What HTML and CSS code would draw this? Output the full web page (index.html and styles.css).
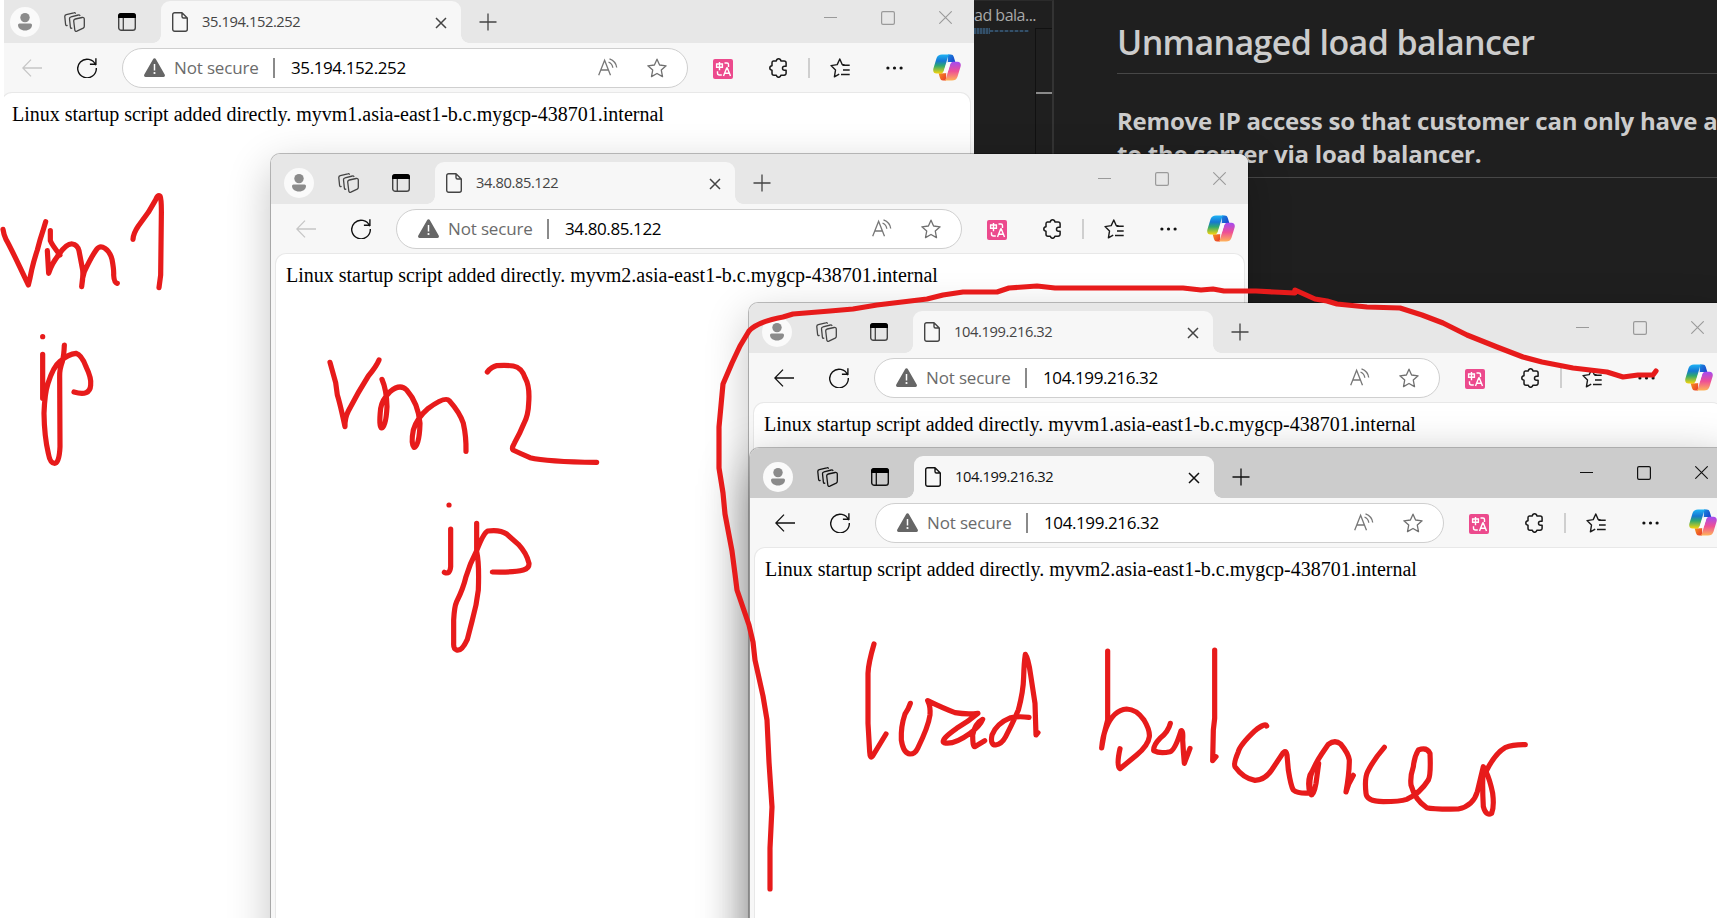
FILE: index.html
```html
<!DOCTYPE html>
<html lang="en">
<head>
<meta charset="utf-8">
<title>Unmanaged load balancer</title>
<link rel="stylesheet" href="styles.css">
</head>
<body>
<svg class="defs" width="0" height="0" aria-hidden="true">
  <defs>
    <linearGradient id="cp-a" x1="0" y1="0" x2="0" y2="1"><stop offset="0" stop-color="#1fb4f5"/><stop offset=".35" stop-color="#1577d2"/><stop offset=".6" stop-color="#2fa86e"/><stop offset="1" stop-color="#f5d40c"/></linearGradient>
    <linearGradient id="cp-b" x1="0" y1="0" x2="0" y2="1"><stop offset="0" stop-color="#a34bf2"/><stop offset=".5" stop-color="#ee4f96"/><stop offset="1" stop-color="#ffb457"/></linearGradient>
    <linearGradient id="cp-c" x1="0" y1="0" x2="1" y2="1"><stop offset="0" stop-color="#1a8be0"/><stop offset="1" stop-color="#1733c4"/></linearGradient>
    <linearGradient id="cp-d" x1="0" y1="0" x2="1" y2="1"><stop offset="0" stop-color="#f9a01b"/><stop offset="1" stop-color="#e8362c"/></linearGradient>
  </defs>
  <symbol id="avatar" viewBox="0 0 30 30"><circle cx="15" cy="15" r="15" fill="#fafafa"/><circle cx="15" cy="10.6" r="4.7" fill="#8b8b8b"/><path d="M9.500 16.500h11a1.500 1.500 0 0 1 1.500 1.500c0 3-2.800 5.500-7 5.500s-7-2.500-7-5.500a1.500 1.500 0 0 1 1.500-1.500z" fill="#8b8b8b"/></symbol>
  <symbol id="spaces" viewBox="0 0 21 20"><g fill="none" stroke="currentColor" stroke-width="1.300" stroke-linejoin="round" stroke-linecap="round"><path d="M11.300 7l6.800-1.500c1.300-.3 2.200.3 2.200 1.500v7.300c0 .9-.3 1.500-1.100 1.900l-6.300 2.900c-1.200.5-2 0-2.100-1.100L9.700 9c-.1-1.100.5-1.700 1.600-2z"/><path d="M15.900 3.500c-.3-.5-.8-.7-1.500-.5L7 4.800c-1 .2-1.600.9-1.500 1.900l.9 8.500c.1.900.6 1.200 1.400 1"/><path d="M11.300 1.200c-.3-.5-.8-.6-1.500-.4L2.300 2.700C1.200 3 .7 3.700.8 4.700l.8 7.800c.1.900.6 1.200 1.500 1"/></g></symbol>
  <symbol id="vtabs" viewBox="0 0 18 18"><rect x=".7" y=".7" width="16.600" height="16.600" rx="2.600" fill="none" stroke="currentColor" stroke-width="1.400"/><path d="M3 0h12a3 3 0 0 1 3 3v2H0V3a3 3 0 0 1 3-3z" fill="#000"/><path d="M5.300 5v12" stroke="currentColor" stroke-width="1.300"/></symbol>
  <symbol id="page" viewBox="0 0 16 20"><path d="M2.700.7H10l5.300 5.300v11.300a2 2 0 0 1-2 2H2.700a2 2 0 0 1-2-2V2.700a2 2 0 0 1 2-2zM10 .7V4.500A1.500 1.500 0 0 0 11.500 6h3.800" fill="none" stroke="currentColor" stroke-width="1.400" stroke-linejoin="round"/></symbol>
  <symbol id="x" viewBox="0 0 12 12"><path d="M1 1l10 10M11 1L1 11" stroke="currentColor" stroke-width="1.500" fill="none"/></symbol>
  <symbol id="plus" viewBox="0 0 18 18"><path d="M9 .5v17M.5 9h17" stroke="currentColor" stroke-width="1.300" fill="none"/></symbol>
  <symbol id="min" viewBox="0 0 13 13"><path d="M0 6.500h13" stroke="currentColor" stroke-width="1"/></symbol>
  <symbol id="max" viewBox="0 0 14 14"><rect x=".6" y=".6" width="12.800" height="12.800" rx="1.400" fill="none" stroke="currentColor" stroke-width="1.200"/></symbol>
  <symbol id="cls" viewBox="0 0 13 13"><path d="M.3.300l12.400 12.400M12.700.300L.3 12.700" stroke="currentColor" stroke-width="1.100"/></symbol>
  <symbol id="back" viewBox="0 0 20 18"><path d="M20 9H.8M9 .6L.8 9 9 17.400" fill="none" stroke="currentColor" stroke-width="1.300"/></symbol>
  <symbol id="reload" viewBox="0 0 20 20"><path d="M18.700 7.200A9.300 9.300 0 1 0 19.300 10M18.900 .3v6h-6" fill="none" stroke="#111" stroke-width="1.400"/></symbol>
  <symbol id="warn" viewBox="0 0 21 19"><path d="M9.200.9a1.500 1.500 0 0 1 2.600 0l8.900 15.700a1.500 1.500 0 0 1-1.300 2.300H1.600A1.500 1.500 0 0 1 .3 16.600z" fill="#666"/><path d="M10.500 6v6.500" stroke="#fff" stroke-width="1.500"/><circle cx="10.500" cy="15" r="1.100" fill="#fff"/></symbol>
  <symbol id="read" viewBox="0 0 20 18"><g fill="none" stroke="#777" stroke-width="1.300"><path d="M.7 17.300L6.600 2.200l5.900 15.100M2.900 12h7.400M10.500 4c2.400 1 4 3 4.300 5.800M11.500.9c4.100 1.500 6.700 4.400 7.200 8.600"/></g></symbol>
  <symbol id="star" viewBox="0 0 20 20"><path d="M10 1.200l2.600 5.800 6.500.8-4.800 4.300 1.200 6.500L10 15.500l-5.500 3.100 1.200-6.500L.9 7.800 7.400 7z" fill="none" stroke="#707070" stroke-width="1.300" stroke-linejoin="round"/></symbol>
  <symbol id="translate" viewBox="0 0 20 20"><rect width="20" height="20" rx="2" fill="#ec4a8d"/><g fill="none" stroke="#fff" stroke-width="1.400"><path d="M3.600 5h5.800v3.200H3.600zM6.500 3v8.300M11.500 4h2.500c1 0 1.500.6 1.500 1.600V8M4.500 12.300v1.700c0 1.300.6 2 2 2h2.300M10.500 17l3.200-8h.6l3.200 8M11.700 14.300h4.600"/></g></symbol>
  <symbol id="puzzle" viewBox="0 0 19 20"><path d="M4.500 3h2.800c.2-1.400 1-2.200 2.300-2.200s2.100.8 2.300 2.200h3.200a2 2 0 0 1 2 2v3.200h-1.600a2 2 0 0 0 0 4h1.600v3a2 2 0 0 1-2 2h-3.200c-.2 1.400-1 2.100-2.300 2.100s-2.100-.7-2.300-2.100H5a2 2 0 0 1-2-2v-3C1.600 12 .8 11.300.8 10s.8-2.100 2.200-2.300V4.900A1.800 1.800 0 0 1 4.500 3z" fill="none" stroke="#1a1a1a" stroke-width="1.500" stroke-linejoin="round"/></symbol>
  <symbol id="favs" viewBox="0 0 20 20"><path d="M12.500 7.200H19.700M13 12h6.700M11 16.500h8.700" stroke="#1a1a1a" stroke-width="1.400"/><path d="M14.500 6.700L12.200 6.500 9.800 1 7.200 6.600 1 7.600l4.500 4.500L4.400 18.800l4.800-2.700" fill="none" stroke="#1a1a1a" stroke-width="1.400" stroke-linejoin="round"/></symbol>
  <symbol id="dots" viewBox="0 0 17 4"><g fill="#111"><circle cx="1.900" cy="2" r="1.600"/><circle cx="8.500" cy="2" r="1.600"/><circle cx="15.100" cy="2" r="1.600"/></g></symbol>
  <symbol id="copilot" viewBox="0 0 28 27"><path d="M15 .4h2.800c1.600 0 2.500.8 3 2.500l1.500 5h-4c-2 0-3 .8-3.600 2.500z" fill="url(#cp-c)"/><path d="M13 26.600h-3c-1.600 0-2.500-.8-3-2.500l-1.400-4.800h3.800c2 0 3.200-.8 3.800-2.500z" fill="url(#cp-d)"/><path d="M9 .4h8.500c-1.300 0-2.100.9-2.500 2.300L10.700 17c-.5 1.700-1.500 2.400-3 2.400H3.500C.8 19.400-.3 17.500.4 14.500L3.600 4C4.400 1.600 6.200.4 9 .4z" fill="url(#cp-a)"/><path d="M19 26.600h-8.600c1.400 0 2.200-.9 2.600-2.300L17.300 10c.5-1.500 1.500-2.200 3-2.200h4.200c2.700 0 3.800 2 3.100 4.800L24.400 23c-.8 2.400-2.600 3.600-5.400 3.600z" fill="url(#cp-b)"/><path d="M15.600 8h3.700c-1.300.3-1.800 1-2.200 2.200L15 17c-.5 1.500-1.200 2.200-2.600 2.300H8.900c1.200-.3 1.700-1.100 2.100-2.300l2.200-6.800C13.700 8.700 14.400 8 15.600 8z" fill="#fbfbfb"/></symbol>
</svg>

<div class="desktop">
  <section class="editor">
    <div class="pane">
      <div class="crumb">ad bala...</div>
      <div class="minimap"><i class="code"></i><i class="code thin"></i></div>
      <div class="ruler"><i class="mark"></i></div>
    </div>
    <article class="preview">
      <h1>Unmanaged load balancer</h1>
      <h3>Remove IP access so that customer can only have a<br>to the server via load balancer.</h3>
    </article>
  </section>

  <section class="window w1">
    <header class="strip">
      <svg class="avatar"><use href="#avatar"/></svg>
      <svg class="spaces"><use href="#spaces"/></svg>
      <svg class="vtabs"><use href="#vtabs"/></svg>
      <div class="tab"><svg class="page"><use href="#page"/></svg><span class="title">35.194.152.252</span><svg class="close"><use href="#x"/></svg></div>
      <svg class="plus"><use href="#plus"/></svg>
      <div class="controls"><svg><use href="#min"/></svg><svg class="max"><use href="#max"/></svg><svg><use href="#cls"/></svg></div>
    </header>
    <nav class="toolbar">
      <svg class="back disabled"><use href="#back"/></svg>
      <svg class="reload"><use href="#reload"/></svg>
      <div class="address"><svg class="warn"><use href="#warn"/></svg><span class="note">Not secure</span><i class="bar"></i><span class="url">35.194.152.252</span><svg class="read"><use href="#read"/></svg><svg class="star"><use href="#star"/></svg></div>
      <svg class="translate"><use href="#translate"/></svg>
      <svg class="puzzle"><use href="#puzzle"/></svg>
      <i class="sep"></i>
      <svg class="favs"><use href="#favs"/></svg>
      <svg class="dots"><use href="#dots"/></svg>
      <svg class="copilot"><use href="#copilot"/></svg>
    </nav>
    <main class="content">Linux startup script added directly. myvm1.asia-east1-b.c.mygcp-438701.internal</main>
  </section>
  <div class="edge"></div>

  <section class="window w2">
    <header class="strip">
      <svg class="avatar"><use href="#avatar"/></svg>
      <svg class="spaces"><use href="#spaces"/></svg>
      <svg class="vtabs"><use href="#vtabs"/></svg>
      <div class="tab"><svg class="page"><use href="#page"/></svg><span class="title">34.80.85.122</span><svg class="close"><use href="#x"/></svg></div>
      <svg class="plus"><use href="#plus"/></svg>
      <div class="controls"><svg><use href="#min"/></svg><svg class="max"><use href="#max"/></svg><svg><use href="#cls"/></svg></div>
    </header>
    <nav class="toolbar">
      <svg class="back disabled"><use href="#back"/></svg>
      <svg class="reload"><use href="#reload"/></svg>
      <div class="address"><svg class="warn"><use href="#warn"/></svg><span class="note">Not secure</span><i class="bar"></i><span class="url">34.80.85.122</span><svg class="read"><use href="#read"/></svg><svg class="star"><use href="#star"/></svg></div>
      <svg class="translate"><use href="#translate"/></svg>
      <svg class="puzzle"><use href="#puzzle"/></svg>
      <i class="sep"></i>
      <svg class="favs"><use href="#favs"/></svg>
      <svg class="dots"><use href="#dots"/></svg>
      <svg class="copilot"><use href="#copilot"/></svg>
    </nav>
    <main class="content">Linux startup script added directly. myvm2.asia-east1-b.c.mygcp-438701.internal</main>
  </section>

  <section class="window w3">
    <header class="strip">
      <svg class="avatar"><use href="#avatar"/></svg>
      <svg class="spaces"><use href="#spaces"/></svg>
      <svg class="vtabs"><use href="#vtabs"/></svg>
      <div class="tab"><svg class="page"><use href="#page"/></svg><span class="title">104.199.216.32</span><svg class="close"><use href="#x"/></svg></div>
      <svg class="plus"><use href="#plus"/></svg>
      <div class="controls"><svg><use href="#min"/></svg><svg class="max"><use href="#max"/></svg><svg><use href="#cls"/></svg></div>
    </header>
    <nav class="toolbar">
      <svg class="back"><use href="#back"/></svg>
      <svg class="reload"><use href="#reload"/></svg>
      <div class="address"><svg class="warn"><use href="#warn"/></svg><span class="note">Not secure</span><i class="bar"></i><span class="url">104.199.216.32</span><svg class="read"><use href="#read"/></svg><svg class="star"><use href="#star"/></svg></div>
      <svg class="translate"><use href="#translate"/></svg>
      <svg class="puzzle"><use href="#puzzle"/></svg>
      <i class="sep"></i>
      <svg class="favs"><use href="#favs"/></svg>
      <svg class="dots"><use href="#dots"/></svg>
      <svg class="copilot"><use href="#copilot"/></svg>
    </nav>
    <main class="content">Linux startup script added directly. myvm1.asia-east1-b.c.mygcp-438701.internal</main>
  </section>

  <section class="window w4 active">
    <header class="strip">
      <svg class="avatar"><use href="#avatar"/></svg>
      <svg class="spaces"><use href="#spaces"/></svg>
      <svg class="vtabs"><use href="#vtabs"/></svg>
      <div class="tab"><svg class="page"><use href="#page"/></svg><span class="title">104.199.216.32</span><svg class="close"><use href="#x"/></svg></div>
      <svg class="plus"><use href="#plus"/></svg>
      <div class="controls"><svg><use href="#min"/></svg><svg class="max"><use href="#max"/></svg><svg><use href="#cls"/></svg></div>
    </header>
    <nav class="toolbar">
      <svg class="back"><use href="#back"/></svg>
      <svg class="reload"><use href="#reload"/></svg>
      <div class="address"><svg class="warn"><use href="#warn"/></svg><span class="note">Not secure</span><i class="bar"></i><span class="url">104.199.216.32</span><svg class="read"><use href="#read"/></svg><svg class="star"><use href="#star"/></svg></div>
      <svg class="translate"><use href="#translate"/></svg>
      <svg class="puzzle"><use href="#puzzle"/></svg>
      <i class="sep"></i>
      <svg class="favs"><use href="#favs"/></svg>
      <svg class="dots"><use href="#dots"/></svg>
      <svg class="copilot"><use href="#copilot"/></svg>
    </nav>
    <main class="content">Linux startup script added directly. myvm2.asia-east1-b.c.mygcp-438701.internal</main>
  </section>

  <!-- Red pen strokes over the windows -->
  <svg class="ink" viewBox="0 0 1717 918">
    <g transform="translate(0 180) scale(.33333)">
      <path d="M9 148Q11 163 18 178Q30 198 85 315Q90 296 95 270Q102 240 112 210Q120 178 128 155L137 125"/>
      <path d="M151 152V182Q156 195 180 225M142 212L146 280Q155 250 178 222Q200 190 217 192Q232 194 237 212L248 270Q250 290 245 320Q246 295 253 275Q275 228 290 208Q300 195 315 205Q330 215 336 238Q342 270 341 285Q342 308 352 310"/>
      <path d="M399 178Q400 160 415 138L445 97L466 61Q473 43 480 48Q485 58 484 110L482 285L477 323"/>
      <path d="M128 470h.1M128 523V655M193 495Q192 525 187 545Q178 570 179 590L180 800Q178 850 164 850Q150 850 145 820Q133 770 132 700Q134 640 144 610Q160 560 180 544Q205 522 228 520Q245 525 258 560Q275 595 272 615Q270 650 222 636"/>
    </g>
    <g transform="translate(310 340) scale(.33333)">
      <path d="M60 67L77 128L82 165Q90 190 105 260Q104 235 115 213Q145 155 175 108Q200 78 207 60"/>
      <path d="M216 118Q230 150 231 200Q228 262 215 264Q206 262 212 205Q216 180 240 155Q270 130 290 150Q325 190 330 250Q328 320 312 322Q302 310 310 270Q320 235 355 205Q405 168 418 182Q450 218 460 250Q469 290 468 334"/>
      <path d="M532 96Q545 80 560 77Q590 75 610 78Q635 82 646 115Q660 140 656 190Q655 225 642 250Q630 280 613 310Q604 325 609 330Q630 340 660 353Q710 365 860 367"/>
      <path d="M417 495h.1M422 567V680Q420 705 403 697"/>
      <path d="M500 550L500 635Q508 670 505 750Q500 795 487 840L472 898Q455 935 440 930Q430 927 431 910V840Q433 800 440 785Q460 745 468 710Q480 670 500 632Q520 580 533 573Q570 568 590 582L625 613Q650 640 657 670Q658 685 640 690Q610 698 547 696"/>
    </g>
    <g transform="translate(840 620) scale(.33333)">
      <path d="M102 72Q85 130 84 160V310L89 395Q90 418 98 408L138 342"/>
      <path d="M211 250Q205 268 195 282Q182 320 184 360Q190 400 210 402Q225 402 233 385Q265 320 270 285Q272 260 263 242Q310 265 345 278Q380 284 414 280Q385 305 350 325Q300 360 312 368Q340 376 390 340Q420 318 428 298Q405 310 398 345Q398 380 404 380L434 362"/>
      <path d="M567 292Q535 288 512 293Q470 310 456 345Q450 375 467 375Q485 373 497 350Q520 305 535 270Q550 215 551 170Q552 130 556 103Q565 115 572 165L585 250L588 345L594 338"/>
      <path d="M803 93V300Q790 345 785 384Q788 350 798 325Q820 270 860 267Q890 268 912 300Q930 330 928 350Q925 375 890 405Q860 430 840 446Q828 440 840 386"/>
      <path d="M991 310Q985 335 960 355Q940 375 941 392Q960 402 990 395Q1005 390 1023 332Q1030 330 1028 360Q1030 395 1033 430L1050 385"/>
    </g>
    <g transform="translate(1180 620) scale(.33333)">
      <path d="M104 90V295L100 330L98 422L108 410"/>
      <path d="M260 318Q255 308 225 332Q180 375 175 395Q160 430 165 440Q190 475 225 481Q255 480 275 450L305 405Q317 385 321 405L325 450Q333 500 340 510Q355 522 390 519Q382 490 390 465Q410 430 416 430L408 490Q402 525 394 525Q386 500 392 468Q400 440 425 402L445 373Q465 358 482 372Q505 400 508 420Q508 460 498 516Q505 490 520 466"/>
      <path d="M613 382Q580 420 563 455Q553 475 558 520Q560 545 610 545Q660 545 680 538Q720 520 745 480Q753 465 750 400Q740 380 715 390Q703 410 700 440Q690 470 693 495Q705 540 740 563Q760 568 835 567Q880 558 892 515L910 440Q906 490 910 560Q918 590 935 580Q943 560 938 520Q930 480 918 455Q945 400 975 383Q1000 373 1036 374"/>
    </g>
    <path d="M770 889L770 848L772 807L769 762L768 741L767 720L763 696L755 660L753 642L749 625L737 590L735 574L732 551L725 514L723 493L719 468L719 427L723 384L732 363L740 346L749 331Q757 322 783 317L793 314L830 311L853 309L877 305L927 299L943 295L963 292L997 292L1009 288L1037 286L1055 288L1183 288L1201 290L1213 289L1224 291L1256 291L1274 292L1295 293L1295 290L1315 299L1327 301L1337 304L1367 307L1400 308L1422 315L1443 323L1467 335L1497 347L1523 357L1542 362L1573 368L1607 372L1623 377L1638 375L1653 375L1656 371"/>
  </svg>
</div>
</body>
</html>
```
FILE: styles.css
```css
* { box-sizing: border-box; }
body { margin: 0; background: #fff; font-family: "Open Sans", "Noto Sans", sans-serif; }
svg { flex: none; display: block; }
.defs { position: absolute; }
.desktop { position: relative; width: 1717px; height: 918px; overflow: hidden; background: #fff; }

/* Dark editor behind the browser windows */
.editor { display: flex; height: 400px; margin-left: 974px; background: #1f1f1f; }
.pane { position: relative; width: 80px; padding-top: 4px; border-right: 2px solid #333; border-top: 1px solid #2b2b2b; }
.crumb { height: 23px; font-size: 16px; line-height: 20px; letter-spacing: -.5px; color: #a9a9a9; white-space: nowrap; }
.minimap { display: flex; }
.code { width: 16px; height: 6px; opacity: .6; background: repeating-linear-gradient(90deg, #41709a 0 2px, #2a4258 2px 3px); }
.code.thin { width: 39px; height: 2px; margin-top: 2px; background: repeating-linear-gradient(90deg, #41709a 0 3px, #25394b 3px 5px); }
.ruler { position: absolute; left: 61px; right: 0; top: 27px; bottom: 0; border: 1px solid #111; border-right: 0; }
.mark { display: block; height: 2px; margin-top: 63px; background: #8a8a8a; }
.preview { flex: 1; min-width: 0; padding-left: 63px; color: #ccc; }
.preview h1 { height: 74px; margin: 0; padding-top: 19px; font-size: 34px; line-height: 46px; font-weight: 600; letter-spacing: -.62px; white-space: nowrap; border-bottom: 1px solid #474747; }
.preview h3 { height: 104px; margin: 0; padding-top: 30px; font-size: 24px; line-height: 33px; font-weight: 680; letter-spacing: -.22px; white-space: nowrap; border-bottom: 1px solid #474747; }

/* Browser windows */
.window { position: absolute; display: flex; flex-direction: column; width: 977px; height: 1000px; background: #f7f7f7; border-radius: 9px; color: #444;
  box-shadow: 0 0 0 1px rgba(0,0,0,.25), 0 14px 44px rgba(0,0,0,.24); }
.w1 { left: -3px; top: -7px; box-shadow: none; }
.w2 { left: 271px; top: 154px; }
.w3 { left: 749px; top: 303px; }
.w4 { left: 750px; top: 448px; width: 980px; }
.active { color: #111; box-shadow: 0 0 0 1px rgba(0,0,0,.25), 0 18px 50px rgba(0,0,0,.42); }
.edge { position: absolute; left: 0; top: 0; width: 4px; height: 918px; background: #fff; }

.strip { display: flex; align-items: center; height: 50px; padding-left: 13px; background: #e7e7e7; border-radius: 9px 9px 0 0; }
.active .strip { background: #ccc; }
.avatar { width: 30px; height: 30px; margin-top: 8px; }
.spaces { width: 21px; height: 20px; margin: 8px 0 0 24px; }
.vtabs { width: 18px; height: 18px; margin: 8px 0 0 33px; }
.tab { position: relative; display: flex; align-items: center; width: 300px; height: 42px; margin: 8px 0 0 25px; padding: 0 14px 0 11px; background: #f7f7f7; border-radius: 9px 9px 0 0; }
.tab::before, .tab::after { content: ""; position: absolute; bottom: 0; width: 8px; height: 8px; }
.tab::before { left: -8px; background: radial-gradient(circle at 0 0, transparent 7.5px, #f7f7f7 8px); }
.tab::after { right: -8px; background: radial-gradient(circle at 100% 0, transparent 7.5px, #f7f7f7 8px); }
.page { width: 16px; height: 20px; }
.title { flex: 1; margin: -2px 0 0 14px; font-size: 14.7px; line-height: 20px; letter-spacing: -.4px; }
.close { width: 12px; height: 12px; margin-top: 2px; }
.plus { width: 18px; height: 18px; margin: 7px 0 0 18px; }
.controls { display: flex; align-items: center; margin: -1px 7px 0 auto; gap: 44px; padding-right: 15px; color: #9a9a9a; }
.controls svg { width: 13px; height: 13px; }
.controls .max { width: 14px; height: 14px; }
.active .controls { color: #111; }

.toolbar { display: flex; align-items: center; height: 49px; padding: 0 13px 0 25px; }
.back { width: 20px; height: 18px; color: #111; }
.back.disabled { color: #c6c6c6; }
.reload { width: 20px; height: 20px; margin-left: 35px; }
.address { display: flex; flex: 1; align-items: center; height: 40px; margin: 1px 25px 0; padding: 0 20px 0 21px; background: #fff; border: 1px solid #cfcfcf; border-radius: 20px; }
.warn { width: 21px; height: 19px; margin-top: -1px; }
.note { width: 99px; margin: -2px 0 0 9px; font-size: 17px; letter-spacing: -.15px; color: #6b6b6b; white-space: nowrap; }
.bar { width: 2px; height: 20px; background: #8a8a8a; }
.url { flex: 1; margin: -2px 0 0 16px; font-size: 17px; letter-spacing: -.4px; color: #000; }
.read { width: 20px; height: 18px; margin-top: -2px; }
.star { width: 20px; height: 20px; margin-left: 29px; }
.translate { width: 20px; height: 20px; margin-top: 2px; }
.puzzle { width: 19px; height: 20px; margin-left: 36px; }
.sep { width: 2px; height: 20px; margin-left: 20px; background: #cfcfcf; }
.favs { width: 20px; height: 20px; margin-left: 20px; }
.dots { width: 17px; height: 4px; margin-left: 36px; }
.copilot { width: 28px; height: 27px; margin-left: 30px; }

.content { flex: 1; margin: 1px 4px 0 5px; padding: 10px; background: #fff; border-radius: 10px 10px 0 0; box-shadow: 0 0 0 1px #e8e8e8; font: 20px/23px "Liberation Serif", serif; color: #000; white-space: nowrap; }

.ink { position: absolute; left: 0; top: 0; width: 1717px; height: 918px; pointer-events: none; }
.ink path { fill: none; stroke: #e71b1b; stroke-width: 5.2; stroke-linecap: round; stroke-linejoin: round; vector-effect: non-scaling-stroke; }
```
